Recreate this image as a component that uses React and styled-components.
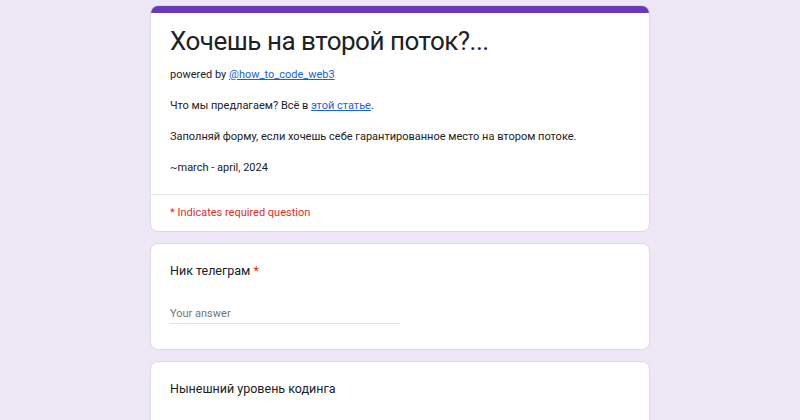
import React from "react";
import styled, { createGlobalStyle } from "styled-components";

const GlobalStyle = createGlobalStyle`
  body {
    margin: 0;
    background: #ede7f6;
    font-family: Roboto, "Noto Sans", Arial, sans-serif;
    color: #202124;
  }
`;

const Page = styled.div`
  display: flex;
  flex-direction: column;
  align-items: center;
  gap: 11px;
  padding-top: 5px;
  min-height: 420px;
  box-sizing: border-box;
`;

const Card = styled.div`
  width: 500px;
  box-sizing: border-box;
  background: #fff;
  border: 1px solid #dadce0;
  border-radius: 8px;
  overflow: hidden;
`;

const TopBar = styled.div`
  height: 8px;
  background: #673ab7;
  margin: -1px -1px 0;
`;

const Header = styled.div`
  padding: 10px 19px 19px;
`;

const Title = styled.h1`
  margin: 0 0 8px;
  font-size: 26px;
  font-weight: 400;
  letter-spacing: -0.5px;
  line-height: 36px;
  color: #202124;
`;

const Para = styled.p`
  margin: 0 0 ${(p) => p.gap ?? 16}px;
  font-size: 11px;
  line-height: 15px;
  color: #202124;
`;

const Link = styled.a`
  color: #1a62d6;
  text-decoration: underline;
`;

const Required = styled.div`
  border-top: 1px solid #e6e6e6;
  padding: 10px 19px 11px;
  font-size: 11px;
  line-height: 15px;
  color: #d93025;
`;

const Question = styled.div`
  padding: 17px 19px ${(p) => p.bottom ?? 25}px;
`;

const Label = styled.div`
  font-size: 12.5px;
  line-height: 20px;
  color: #202124;
`;

const Star = styled.span`
  color: #d93025;
`;

const Answer = styled.input`
  display: block;
  width: 230px;
  margin-top: 24px;
  padding: 2px 0 3px;
  border: none;
  border-bottom: 1px solid #e0e0e0;
  outline: none;
  font-family: inherit;
  font-size: 11px;
  color: #202124;
  &::placeholder {
    color: #70757a;
  }
`;

export default function App() {
  return (
    <>
      <GlobalStyle />
      <Page>
        <Card>
          <TopBar />
          <Header>
            <Title>Хочешь на второй поток?...</Title>
            <Para>
              powered by <Link href="#">@how_to_code_web3</Link>
            </Para>
            <Para>
              Что мы предлагаем? Всё в <Link href="#">этой статье</Link>.
            </Para>
            <Para>
              Заполняй форму, если хочешь себе гарантированное место на втором
              потоке.
            </Para>
            <Para gap={0}>~march - april, 2024</Para>
          </Header>
          <Required>* Indicates required question</Required>
        </Card>
        <Card>
          <Question>
            <Label>
              Ник телеграм <Star>*</Star>
            </Label>
            <Answer placeholder="Your answer" />
          </Question>
        </Card>
        <Card>
          <Question bottom={60}>
            <Label>Нынешний уровень кодинга</Label>
          </Question>
        </Card>
      </Page>
    </>
  );
}
